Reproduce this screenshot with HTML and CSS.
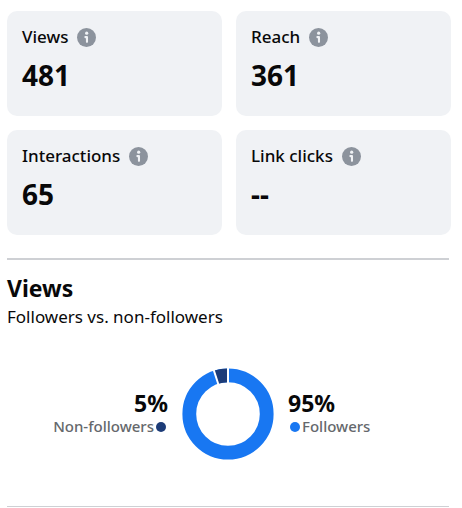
FILE: index.html
```html
<!DOCTYPE html>
<html lang="en">
<head>
<meta charset="utf-8">
<meta name="viewport" content="width=device-width, initial-scale=1">
<title>Insights</title>
<link rel="stylesheet" href="styles.css">
</head>
<body>
<svg class="defs" aria-hidden="true">
  <symbol id="info" viewBox="0 0 20 20">
    <circle cx="10" cy="10" r="10" fill="#8c939d"/>
    <circle cx="10.2" cy="5.4" r="1.7" fill="#f0f2f5"/>
    <path d="M8.8 9.6h1.7v5" fill="none" stroke="#f0f2f5" stroke-width="2.2" stroke-linecap="round" stroke-linejoin="round"/>
  </symbol>
</svg>
<main>
  <section class="metrics">
    <article class="card">
      <h3 class="label">Views <svg class="info"><use href="#info"/></svg></h3>
      <p class="value">481</p>
    </article>
    <article class="card">
      <h3 class="label">Reach <svg class="info"><use href="#info"/></svg></h3>
      <p class="value">361</p>
    </article>
    <article class="card">
      <h3 class="label">Interactions <svg class="info"><use href="#info"/></svg></h3>
      <p class="value">65</p>
    </article>
    <article class="card">
      <h3 class="label">Link clicks <svg class="info"><use href="#info"/></svg></h3>
      <p class="value">--</p>
    </article>
  </section>
  <section class="views">
    <h2 class="title">Views</h2>
    <p class="subtitle">Followers vs. non-followers</p>
    <div class="chart">
      <div class="stat stat-end">
        <p class="percent">5%</p>
        <p class="legend">Non-followers<span class="dot dot-dark"></span></p>
      </div>
      <svg class="donut" viewBox="-46 -46 92 92" role="img" aria-label="95% followers, 5% non-followers">
        <circle r="38.7" fill="none" stroke="#1877f2" stroke-width="13.8"/>
        <path d="M0-38.7A38.7 38.7 0 0 0-11.96-36.8" fill="none" stroke="#1d3c78" stroke-width="13.8"/>
        <path d="M0-30V-47M-9.27-28.53-14.52-44.7" stroke="#fff" stroke-width="2"/>
      </svg>
      <div class="stat">
        <p class="percent">95%</p>
        <p class="legend"><span class="dot dot-blue"></span>Followers</p>
      </div>
    </div>
  </section>
</main>
</body>
</html>
```
FILE: styles.css
```css
* {
  box-sizing: border-box;
  margin: 0;
}

body {
  background: #fff;
  color: #080809;
  font-family: "Segoe UI", "Noto Sans", sans-serif;
}

.defs {
  position: absolute;
  width: 0;
  height: 0;
}

main {
  padding: 11px 11px 0 7px;
}

.metrics {
  display: grid;
  grid-template-columns: 1fr 1fr;
  gap: 14px;
}

.card {
  padding: 14px 15px;
  background: #f0f2f5;
  border-radius: 10px;
}

.label {
  display: flex;
  align-items: center;
  gap: 9px;
  font-size: 17px;
  font-weight: 500;
  line-height: 24px;
}

.info {
  width: 19px;
  height: 19px;
}

.value {
  padding: 8px 0 9px;
  font-size: 28px;
  font-weight: 700;
  line-height: 36px;
}

.views {
  margin: 23px 2px 0 0;
  border-top: 2px solid #ced0d4;
  border-bottom: 1px solid #ced0d4;
}

.title {
  padding-top: 12px;
  font-size: 23px;
  font-weight: 700;
  line-height: 32px;
}

.subtitle {
  font-size: 17px;
  line-height: 26px;
}

.chart {
  display: grid;
  grid-template-columns: 1fr 92px 1fr;
  align-items: center;
  gap: 14px;
  padding: 38px 0 46px;
}

.stat {
  padding-bottom: 2px;
}

.stat-end {
  text-align: right;
}

.donut {
  width: 92px;
  height: 92px;
}

.percent {
  font-size: 23px;
  font-weight: 700;
  line-height: 26px;
}

.legend {
  color: #65686c;
  font-size: 15px;
  font-weight: 500;
  line-height: 20px;
}

.dot {
  display: inline-block;
  width: 10px;
  height: 10px;
  margin: 0 2px;
  border-radius: 50%;
}

.dot-dark {
  background: #1d3c78;
}

.dot-blue {
  background: #1877f2;
}
```
